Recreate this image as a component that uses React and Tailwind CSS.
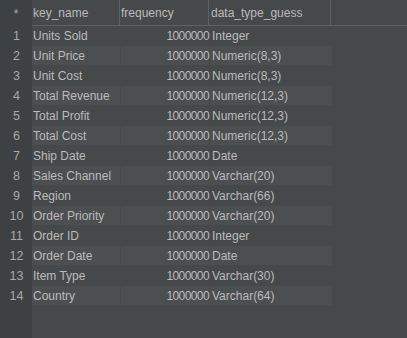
import React from 'react';

const rows = [
    ['Units Sold', '1000000', 'Integer'],
    ['Unit Price', '1000000', 'Numeric(8,3)'],
    ['Unit Cost', '1000000', 'Numeric(8,3)'],
    ['Total Revenue', '1000000', 'Numeric(12,3)'],
    ['Total Profit', '1000000', 'Numeric(12,3)'],
    ['Total Cost', '1000000', 'Numeric(12,3)'],
    ['Ship Date', '1000000', 'Date'],
    ['Sales Channel', '1000000', 'Varchar(20)'],
    ['Region', '1000000', 'Varchar(66)'],
    ['Order Priority', '1000000', 'Varchar(20)'],
    ['Order ID', '1000000', 'Integer'],
    ['Order Date', '1000000', 'Date'],
    ['Item Type', '1000000', 'Varchar(30)'],
    ['Country', '1000000', 'Varchar(64)'],
];

const App = () => {
    return (
        <div
            className="flex w-[407px] h-[338px] bg-[#45494a] text-[12px] text-[#bbbbbb] overflow-hidden"
            style={{ fontFamily: '"Liberation Sans", Arial, sans-serif' }}
        >
            {/* row number gutter */}
            <div className="w-[32px] bg-[#3e4143] flex flex-col text-[#a8a8a8]">
                <div className="h-[26px] flex items-center justify-center pt-[2px]">*</div>
                {rows.map((r, i) => (
                    <div key={i} className="h-[20px] flex items-center justify-center pl-[1px] text-[12.5px]">
                        {i + 1}
                    </div>
                ))}
            </div>

            <div className="flex-1 flex flex-col">
                <div className="h-[26px] flex border-b border-[#5e6163]">
                    <div className="w-[88px] border-r border-[#5e6163] pl-[1px] flex items-center">key_name</div>
                    <div className="w-[89px] border-r border-[#5e6163] pl-[1px] flex items-center">frequency</div>
                    <div className="w-[122px] border-r border-[#5e6163] pl-[2px] flex items-center">data_type_guess</div>
                </div>
                {rows.map((r, i) => {
                    const even = i % 2 === 1;
                    const cell = even ? 'bg-[#4b4f50]' : '';
                    return (
                        <div key={i} className="h-[20px] flex">
                            <div className={`w-[88px] h-[19px] mr-[1px] pl-[1px] flex items-center ${cell}`}>{r[0]}</div>
                            <div className={`w-[88px] h-[19px] mr-[1px] flex items-center justify-end tracking-[-0.6px] ${cell}`}>{r[1]}</div>
                            <div className={`w-[122px] h-[19px] pl-[2px] flex items-center ${cell}`}>{r[2]}</div>
                        </div>
                    );
                })}
            </div>
        </div>
    );
};

export default App;
